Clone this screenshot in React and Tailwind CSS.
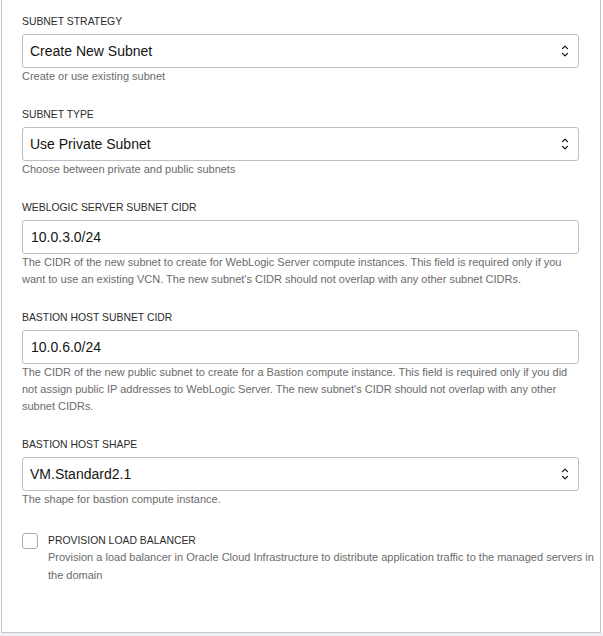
import React from 'react';

const font = { fontFamily: '"Liberation Sans", Arial, sans-serif' };

function Chevrons() {
  return (
    <svg width="8" height="14" viewBox="0 0 8 14" className="text-[#161513]" fill="none" stroke="currentColor" strokeWidth="1.3" strokeLinecap="round" strokeLinejoin="round">
      <path d="M1.5 4.6 L4 2.1 L6.5 4.6" />
      <path d="M1.5 9.4 L4 11.9 L6.5 9.4" />
    </svg>
  );
}

function Field({ label, value, select, help, first }) {
  return (
    <div className={`mr-[19px] ${first ? '' : 'mt-[23px]'}`}>
      <div className="text-[10.4px] leading-[14px] text-[#2b2b2b] uppercase mb-[5px]">{label}</div>
      <div className={`h-[34px] border border-[#bcc0c5] rounded-[3px] bg-white flex items-center justify-between ${select ? 'pl-[7px] pr-[9px]' : 'pl-[8px] pr-2'}`}>
        <span className="text-[14px] text-[#161513]">{value}</span>
        {select && <Chevrons />}
      </div>
      <div className="text-[11px] leading-[17px] text-[#6b6b6b]">{help}</div>
    </div>
  );
}

export default function App() {
  return (
    <div className="w-[603px] h-[636px] bg-white" style={font}>
      <div className="ml-[1px] w-[600px] h-[633px] border-l border-r border-b border-[#c3c7cc] bg-white pl-[20px] pr-[2px] pt-[15px]">
        <Field first label="Subnet Strategy" value="Create New Subnet" select help="Create or use existing subnet" />
        <Field label="Subnet Type" value="Use Private Subnet" select help="Choose between private and public subnets" />
        <Field
          label="WebLogic Server Subnet CIDR"
          value="10.0.3.0/24"
          help="The CIDR of the new subnet to create for WebLogic Server compute instances. This field is required only if you want to use an existing VCN. The new subnet's CIDR should not overlap with any other subnet CIDRs."
        />
        <Field
          label="Bastion Host Subnet CIDR"
          value="10.0.6.0/24"
          help="The CIDR of the new public subnet to create for a Bastion compute instance. This field is required only if you did not assign public IP addresses to WebLogic Server. The new subnet's CIDR should not overlap with any other subnet CIDRs."
        />
        <Field label="Bastion Host Shape" value="VM.Standard2.1" select help="The shape for bastion compute instance." />

        <div className="mt-[25px] flex items-start gap-[10px]">
          <div className="w-[16px] h-[16px] shrink-0 border border-[#a9adb3] rounded-[3px] bg-white" />
          <div className="pt-[1px]">
            <div className="text-[10.4px] leading-[14px] text-[#2b2b2b] uppercase">Provision Load Balancer</div>
            <div className="text-[11px] leading-[18px] text-[#6b6b6b]">
              Provision a load balancer in Oracle Cloud Infrastructure to distribute application traffic to the managed servers in the domain
            </div>
          </div>
        </div>
      </div>
      <div className="h-[3px] bg-[#eef0f3]" />
    </div>
  );
}
